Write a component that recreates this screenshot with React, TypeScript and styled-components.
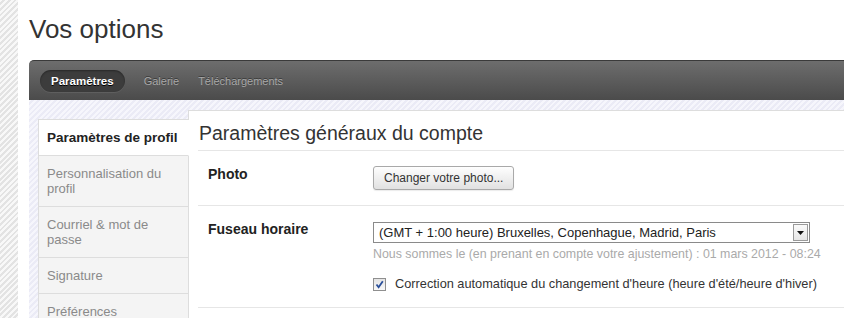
import React from "react";
import styled, { createGlobalStyle } from "styled-components";

const GlobalStyle = createGlobalStyle`
  html, body { margin: 0; padding: 0; background: #fff; }
  body {
    font-family: "Liberation Sans", Arial, sans-serif;
    color: #333;
    overflow: hidden;
  }
`;

const Page = styled.div`
  display: flex;
  height: 100vh;
  min-height: 318px;
  overflow: hidden;
`;

const Gutter = styled.div`
  flex: none;
  width: 18px;
  background: repeating-linear-gradient(135deg, #f8f8f8 0 2px, #e3e3e3 2px 4px);
`;

const Main = styled.div`
  flex: 1;
  display: flex;
  flex-direction: column;
  padding-left: 11px;
  min-width: 0;
`;

const Title = styled.h1`
  flex: none;
  margin: 0 0 16px;
  padding-top: 14px;
  font-size: 26px;
  line-height: 30px;
  font-weight: normal;
  color: #333;
`;

const NavBar = styled.nav`
  flex: none;
  height: 39px;
  display: flex;
  align-items: center;
  gap: 19px;
  padding-left: 11px;
  border-top: 1px solid #3a3a3a;
  border-top-left-radius: 5px;
  background: linear-gradient(#6d6d6d, #4b4b4b);
`;

const NavPill = styled.span`
  height: 22px;
  line-height: 22px;
  padding: 0 11px;
  border-radius: 11px;
  background: #3c3c3c;
  box-shadow: inset 0 1px 2px rgba(0, 0, 0, 0.35), 0 1px 0 rgba(255, 255, 255, 0.08);
  color: #fff;
  font-size: 11.5px;
  font-weight: bold;
  text-shadow: 0 1px 0 #000;
`;

const NavLink = styled.span`
  color: #a8a8a8;
  font-size: 11px;
  text-shadow: 0 -1px 0 rgba(0, 0, 0, 0.4);
`;

const Board = styled.div`
  flex: 1 0 auto;
  display: flex;
  align-items: flex-start;
  padding: 10px 0 0 9px;
  background: repeating-linear-gradient(135deg, #f6f6fc 0 2px, #ebebf6 2px 4px);
`;

const Sidebar = styled.ul`
  list-style: none;
  margin: 9px -1px 0 0;
  padding: 0;
  width: 150px;
  flex: none;
  position: relative;
  z-index: 1;
  border-top: 1px solid #ddd;
  border-left: 1px solid #ddd;
`;

const SideItem = styled.li<{ $active?: boolean }>`
  padding: 10px 8px;
  line-height: 15px;
  border-bottom: 1px solid #ddd;
  border-right: 1px solid ${(p) => (p.$active ? "#fff" : "#ddd")};
  background: ${(p) => (p.$active ? "#fff" : "#f4f4f4")};
  color: ${(p) => (p.$active ? "#222" : "#8a8a8a")};
  font-size: ${(p) => (p.$active ? "13.5px" : "13px")};
  font-weight: ${(p) => (p.$active ? "bold" : "normal")};
`;

const Panel = styled.section`
  flex: 1;
  align-self: stretch;
  min-width: 0;
  background: #fff;
  border-top: 1px solid #ddd;
  border-left: 1px solid #ddd;
  padding-left: 9px;
`;

const PanelTitle = styled.h2`
  margin: 0;
  padding: 10px 0 5px 1px;
  font-size: 19.5px;
  line-height: 24px;
  font-weight: normal;
  color: #333;
  border-bottom: 1px solid #e6e6e6;
`;

const Row = styled.div`
  display: grid;
  grid-template-columns: 165px 1fr;
  padding: 15px 0 15px 10px;
  border-bottom: 1px solid #e6e6e6;
`;

const Label = styled.div`
  font-size: 14px;
  line-height: 16px;
  font-weight: bold;
  color: #222;
`;

const Field = styled.div`
  display: flex;
  flex-direction: column;
  align-items: flex-start;
`;

const Button = styled.button`
  height: 24px;
  padding: 0 10px;
  border: 1px solid #a9a9a9;
  border-radius: 3px;
  background: linear-gradient(#fefefe, #e1e1e1);
  box-shadow: 0 1px 1px rgba(0, 0, 0, 0.08);
  font-family: inherit;
  font-size: 12px;
  color: #333;
`;

const Select = styled.div`
  width: 437px;
  height: 21px;
  margin-top: 1px;
  box-sizing: border-box;
  display: flex;
  align-items: center;
  border: 1px solid #8a8a8a;
  background: #fff;
  padding-left: 5px;
  font-size: 13px;
  color: #222;
`;

const SelectText = styled.span`
  flex: 1;
  white-space: nowrap;
`;

const SelectArrow = styled.span`
  width: 15px;
  height: 17px;
  margin-right: 1px;
  box-sizing: border-box;
  border: 1px solid #9a9a9a;
  background: linear-gradient(#fafafa, #e6e6e6);
  display: flex;
  align-items: center;
  justify-content: center;
`;

const Hint = styled.div`
  margin-top: 4px;
  font-size: 12.4px;
  line-height: 14px;
  color: #aaa;
  white-space: nowrap;
`;

const CheckLine = styled.label`
  margin-top: 15px;
  display: flex;
  align-items: center;
  gap: 9px;
  font-size: 12.75px;
  line-height: 16px;
  color: #333;
  white-space: nowrap;
`;

const CheckBox = styled.span`
  width: 13px;
  height: 13px;
  box-sizing: border-box;
  border: 1px solid #8f8f8f;
  background: linear-gradient(#e4e4e4, #f8f8f8);
  display: flex;
  align-items: center;
  justify-content: center;
`;

export default function App() {
  return (
    <>
      <GlobalStyle />
      <Page>
        <Gutter />
        <Main>
          <Title>Vos options</Title>
          <NavBar>
            <NavPill>Paramètres</NavPill>
            <NavLink>Galerie</NavLink>
            <NavLink>Téléchargements</NavLink>
          </NavBar>
          <Board>
            <Sidebar>
              <SideItem $active>Paramètres de profil</SideItem>
              <SideItem>Personnalisation du profil</SideItem>
              <SideItem>Courriel &amp; mot de passe</SideItem>
              <SideItem>Signature</SideItem>
              <SideItem>Préférences</SideItem>
            </Sidebar>
            <Panel>
              <PanelTitle>Paramètres généraux du compte</PanelTitle>
              <Row>
                <Label>Photo</Label>
                <Field>
                  <Button type="button">Changer votre photo...</Button>
                </Field>
              </Row>
              <Row>
                <Label>Fuseau horaire</Label>
                <Field>
                  <Select>
                    <SelectText>(GMT + 1:00 heure) Bruxelles, Copenhague, Madrid, Paris</SelectText>
                    <SelectArrow>
                      <svg width="7" height="4" viewBox="0 0 7 4">
                        <path d="M0 0h7L3.5 4z" fill="#111" />
                      </svg>
                    </SelectArrow>
                  </Select>
                  <Hint>Nous sommes le (en prenant en compte votre ajustement) : 01 mars 2012 - 08:24</Hint>
                  <CheckLine>
                    <CheckBox>
                      <svg width="9" height="9" viewBox="0 0 9 9">
                        <path d="M1.5 4.5L3.6 7.2L7.8 1.2" fill="none" stroke="#2a4f9a" strokeWidth="1.8" />
                      </svg>
                    </CheckBox>
                    Correction automatique du changement d'heure (heure d'été/heure d'hiver)
                  </CheckLine>
                </Field>
              </Row>
            </Panel>
          </Board>
        </Main>
      </Page>
    </>
  );
}
